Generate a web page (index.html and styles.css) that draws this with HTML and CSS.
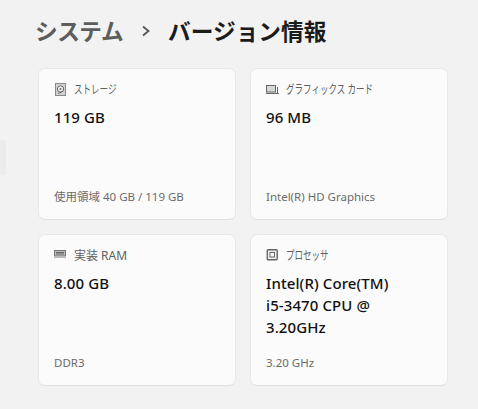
FILE: index.html
```html
<!DOCTYPE html>
<html lang="ja">
<head>
    <meta charset="UTF-8">
    <meta name="viewport" content="width=device-width, initial-scale=1.0">
    <title>バージョン情報</title>
    <link rel="stylesheet" href="styles.css">
</head>
<body>
    <div class="nav-tab"></div>

    <h1 class="crumbs">
        <span class="crumb-parent">システム</span>
        <svg class="crumb-arrow" width="10" height="12" viewBox="0 0 10 12"><path d="M2 1.5 L7.5 6 L2 10.5" fill="none" stroke="#555" stroke-width="1.8"/></svg>
        <span class="crumb-current">バージョン情報</span>
    </h1>

    <div class="cards">
        <div class="card">
            <div class="card-head">
                <svg class="icon" width="13" height="13" viewBox="0 0 13 13">
                    <rect x="1.5" y="0.5" width="10" height="12" fill="#d4d4d4" stroke="#888"/>
                    <circle cx="6.5" cy="6" r="3.2" fill="#eee" stroke="#666"/>
                    <circle cx="6.5" cy="6" r="1" fill="#666"/>
                    <path d="M4 10.5 L8.5 8.5" stroke="#666"/>
                </svg>
                <span class="kana">ストレージ</span>
            </div>
            <div class="card-value">119 GB</div>
            <div class="card-note">使用領域 40 GB / 119 GB</div>
        </div>

        <div class="card">
            <div class="card-head">
                <svg class="icon" width="13" height="11" viewBox="0 0 13 11">
                    <rect x="0.5" y="1.5" width="9" height="6.5" fill="#d8d8d8" stroke="#666"/>
                    <path d="M0 9.5 H13 M11.5 3 V9" stroke="#666" fill="none"/>
                </svg>
                <span class="kana">グラフィックス カード</span>
            </div>
            <div class="card-value">96 MB</div>
            <div class="card-note">Intel(R) HD Graphics</div>
        </div>

        <div class="card">
            <div class="card-head">
                <svg class="icon icon-ram" width="13" height="8" viewBox="0 0 13 8">
                    <rect x="0.5" y="0.5" width="11" height="5.5" fill="#bbb" stroke="#777"/>
                    <path d="M2 2.5 H10 M2 4 H10" stroke="#666"/>
                    <path d="M0 7.5 H12" stroke="#bbb"/>
                </svg>
                <span>実装 RAM</span>
            </div>
            <div class="card-value">8.00 GB</div>
            <div class="card-note">DDR3</div>
        </div>

        <div class="card">
            <div class="card-head">
                <svg class="icon" width="12" height="12" viewBox="0 0 12 12">
                    <rect x="0.75" y="0.75" width="10" height="10" rx="1" fill="#eee" stroke="#666" stroke-width="1.4"/>
                    <rect x="3.5" y="3.5" width="4.5" height="4.5" fill="#fbfbfb" stroke="#666"/>
                </svg>
                <span class="kana">プロセッサ</span>
            </div>
            <div class="card-value">Intel(R) Core(TM)<br>i5-3470 CPU @<br>3.20GHz</div>
            <div class="card-note">3.20 GHz</div>
        </div>
    </div>
</body>
</html>
```

FILE: styles.css
```css
body {
    font-family: "Noto Sans", "Noto Sans CJK JP", sans-serif;
    margin: 0;
    padding: 0;
    height: 409px;
    overflow: hidden;
    background-color: #f2f2f2;
    color: #1b1b1b;
}
.nav-tab {
    position: absolute;
    left: 0;
    top: 140px;
    width: 6px;
    height: 35px;
    background-color: #ebebeb;
    border-radius: 0 3px 3px 0;
}
.crumbs {
    display: flex;
    align-items: center;
    margin: 0;
    padding: 12px 0 0 35px;
    height: 38px;
    font-family: "Noto Sans CJK JP", sans-serif;
    font-size: 22.7px;
    font-weight: 700;
    line-height: 38px;
}
.crumb-parent {
    color: #5d5d5d;
    letter-spacing: -0.5px;
}
.crumb-arrow {
    margin: 0 17px 0 18px;
}
.crumb-current {
    color: #1b1b1b;
}
.cards {
    display: grid;
    grid-template-columns: 198px 198px;
    grid-auto-rows: 152px;
    gap: 14px;
    margin: 18px 0 0 38px;
}
.card {
    display: flex;
    flex-direction: column;
    box-sizing: border-box;
    padding: 12px 15px 14px;
    background-color: #fbfbfb;
    border: 1px solid #e8e8e8;
    border-bottom-color: #e0e0e0;
    border-radius: 7px;
}
.card-head {
    display: flex;
    align-items: center;
    height: 16px;
    font-size: 12px;
    color: #5f5f5f;
}
.icon {
    width: 13px;
    margin-right: 7px;
    flex-shrink: 0;
}
.icon-ram {
    margin-bottom: 3px;
}
.kana {
    white-space: nowrap;
    transform: scaleX(0.71);
    transform-origin: left center;
}
.card-value {
    margin-top: 9px;
    font-size: 15px;
    font-weight: 500;
    letter-spacing: 0.1px;
    line-height: 22px;
    color: #111;
}
.card-note {
    margin-top: auto;
    font-size: 11.5px;
    line-height: 16px;
    color: #6b6b6b;
}
```
